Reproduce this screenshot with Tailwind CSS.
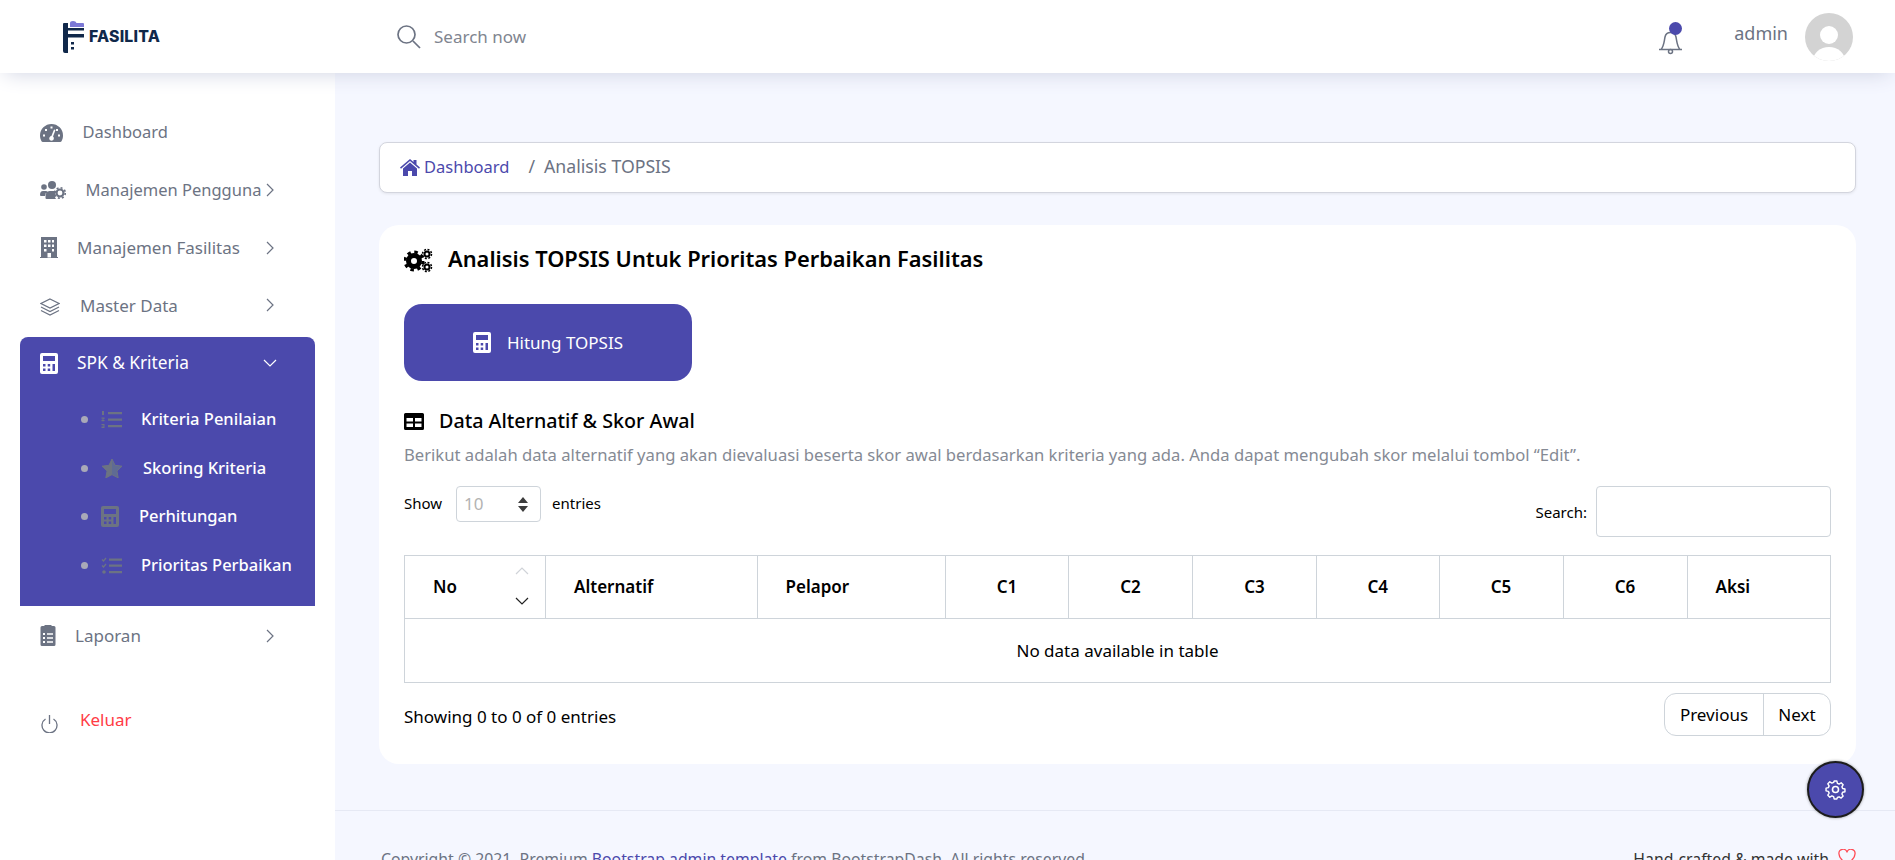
<!DOCTYPE html>
<html lang="id">
<head>
    <meta charset="UTF-8">
    <meta name="viewport" content="width=device-width, initial-scale=1.0">
    <title>Analisis TOPSIS</title>
    <script src="https://cdn.jsdelivr.net/npm/@tailwindcss/browser@4"></script>
</head>
<body class="font-['Noto_Sans',sans-serif] text-black bg-[#f5f7ff]">
    <!-- icon set -->
    <svg class="hidden">
        <symbol id="i-calc" viewBox="0 0 18 21"><path fill="currentColor" fill-rule="evenodd" d="M2 0h14a2 2 0 0 1 2 2v17a2 2 0 0 1-2 2H2a2 2 0 0 1-2-2V2a2 2 0 0 1 2-2zM3 3v5h12V3zM3 11v2.500h2.500V11zM7.700 11v2.500h2.500V11zM12.500 11v7H15v-7zM3 15.500V18h2.500v-2.500zM7.700 15.500V18h2.500v-2.500z"/></symbol>
        <symbol id="i-chev" viewBox="0 0 8 14"><path fill="none" stroke="currentColor" stroke-width="1.200" d="M1 1l6 6-6 6"/></symbol>
    </svg>

    <div class="h-screen overflow-hidden flex flex-col">
        <nav class="relative z-10 h-[73px] shrink-0 bg-white shadow-[0_5px_21px_-5px_#cdd1e1] flex items-center">
            <div class="w-[335px] pl-[63px] flex items-center">
                <svg width="21" height="33" viewBox="0 0 21 33"><path fill="#7b78d6" d="M7 7V3q0-2 3-2t3.500 2H20q1 0 1 1v3z"/><path fill="#10284a" d="M1 3h4v30H2q-2 0-2-2V4q0-1 1-1zM5 8h16v2.500H5zM5 14h16v3.500H5zM8 22h3v2.500H8zM8 27h3v2.500H8z"/></svg>
                <span class="ml-[5px] text-[15.800px] font-['Inter'] font-extrabold text-[#10284a] tracking-[0.2px]">FASILITA</span>
            </div>
            <div class="flex items-center pl-[61px]">
                <svg width="25" height="25" viewBox="0 0 25 25" fill="none" stroke="#6c7383" stroke-width="1.700"><circle cx="10.500" cy="10.500" r="8.500"/><path d="M17 17l7 7"/></svg>
                <input type="text" placeholder="Search now" class="ml-[13px] w-[300px] text-[17px] outline-none placeholder:text-[#7f8590]">
            </div>
            <div class="ml-auto flex items-center">
                <div class="relative w-[25px] h-[25px] mt-[14px]">
                    <svg width="25" height="24" viewBox="0 0 25 24" fill="none" stroke="#6c7383" stroke-width="1.500"><path d="M1 18.500h23M3 18.500C6 15 6 11 7 6c.6-3 3-4.500 5.500-4.500S17.400 3 18 6c1 5 1 9 4 12.500"/><circle cx="12.500" cy="20.500" r="2"/></svg>
                    <span class="absolute -top-[9px] left-[11px] w-[13px] h-[13px] rounded-full bg-[#4b49ac]"></span>
                </div>
                <span class="ml-[51px] -mt-[6px] text-[18px] text-[#6c7383]">admin</span>
                <span class="ml-[17px] mr-[42px] w-[48px] h-[48px] rounded-full bg-[#d3d3d3] overflow-hidden block">
                    <svg width="48" height="48" viewBox="0 0 48 48" fill="#fff"><circle cx="24" cy="22" r="9"/><ellipse cx="24" cy="48" rx="16" ry="14"/></svg>
                </span>
            </div>
        </nav>

        <div class="flex flex-1 min-h-0">
            <aside class="w-[335px] shrink-0 bg-white pt-[31px] text-[17px] text-[#6c7383]">
                <a class="mx-5 pl-5 pr-[41px] h-[57.500px] flex items-center">
                    <span class="w-[42.500px] shrink-0"><svg class="block" width="23" height="18" viewBox="0 0 23 18"><path fill="#6c7383" d="M11.500 0A11.500 11.500 0 0 0 0 11.500c0 2 .5 4 1.500 5.700q.4.800 1.300.8h17.400q.9 0 1.300-.8c1-1.700 1.500-3.700 1.500-5.700A11.500 11.500 0 0 0 11.500 0z"/><path fill="#fff" d="M10.500 2.500h2v2h-2zM5 5h2v2H5zM16 5h2v2h-2zM3 10.500h2v2H3zM18 10.500h2v2h-2zM14 5.500l1.500.6-2.500 6.500a2.300 2.300 0 1 1-1.600-.5z"/></svg></span>
                    <span class="text-[16.500px]">Dashboard</span>
                </a>
                <a class="mx-5 pl-5 pr-[41px] h-[57.500px] flex items-center">
                    <span class="w-[45.500px] shrink-0"><svg class="block" width="26" height="18" viewBox="0 0 26 18" fill="#6c7383"><circle cx="4" cy="6" r="2.800"/><circle cx="12" cy="4" r="4"/><path d="M0 14q0-4 3-4h3q1 0 1.500.5Q5 12 5 15H1q-1 0-1-1zM6.500 18q-1 0-1-1v-1q0-6 4-6h5q1.500 0 2 1-2 1-1 3-1.500 2 .5 4z"/><circle cx="20" cy="12" r="3.500" fill="none" stroke="#6c7383" stroke-width="2.200"/><circle cx="20" cy="12" r="5.300" fill="none" stroke="#6c7383" stroke-width="1.600" stroke-dasharray="2 2.160"/></svg></span>
                    <span class="text-[16.500px]">Manajemen Pengguna</span>
                    <svg class="ml-auto text-[#6c7383]" width="8" height="14"><use href="#i-chev"/></svg>
                </a>
                <a class="mx-5 pl-5 pr-[41px] h-[57.500px] flex items-center">
                    <span class="w-[37px] shrink-0"><svg class="block" width="18" height="21" viewBox="0 0 18 21"><path fill="#6c7383" d="M1 0h16v20h1v1H0v-1h1z"/><path fill="#fff" d="M4 3h2.500v2.500H4zM8 3h2.500v2.500H8zM12 3h2v2.500h-2zM4 7.500h2.500V10H4zM8 7.500h2.500V10H8zM12 7.500h2V10h-2zM4 12h2.500v2.500H4zM12 12h2v2.500h-2zM7.500 16h3.500v4.500H7.500z"/></svg></span>
                    <span>Manajemen Fasilitas</span>
                    <svg class="ml-auto text-[#6c7383]" width="8" height="14"><use href="#i-chev"/></svg>
                </a>
                <a class="mx-5 pl-5 pr-[41px] h-[57.500px] flex items-center">
                    <span class="w-[40px] shrink-0"><svg class="block mt-[4px]" width="20" height="18" viewBox="0 0 20 18" fill="none" stroke="#6c7383" stroke-width="1.200"><path d="M10 1l9 4.500-9 4.500-9-4.500zM1 9l9 4.500L19 9M1 12.500L10 17l9-4.500"/></svg></span>
                    <span>Master Data</span>
                    <svg class="ml-auto text-[#6c7383]" width="8" height="14"><use href="#i-chev"/></svg>
                </a>

                <div class="mx-5 mt-[3px] bg-[#4b49ac] rounded-t-[8px] text-white pb-[16px]">
                    <a class="pl-5 pr-[41px] h-[52px] flex items-center">
                        <span class="w-[37px] shrink-0"><svg class="block" width="18" height="21"><use href="#i-calc"/></svg></span>
                        <span class="text-[17.300px]">SPK &amp; Kriteria</span>
                        <svg class="ml-auto -mr-[3px]" width="14" height="8" viewBox="0 0 14 8" fill="none" stroke="currentColor" stroke-width="1.200"><path d="M1 1l6 6 6-6"/></svg>
                    </a>
                    <ul class="mt-[6px] font-medium text-[16.500px]">
                        <li class="pl-[61px] h-[48.700px] flex items-center">
                            <span class="w-[7px] h-[7px] rounded-full bg-[#a9a9b8] shrink-0"></span>
                            <span class="ml-[13px] w-[40px] shrink-0"><svg class="block" width="21" height="17" viewBox="0 0 21 17" fill="#6c7383"><path d="M7 1h14v2.200H7zM7 7.500h14v2.200H7zM7 14h14v2.200H7zM1 0h2v4H1zM.5 6.500H3.500V8l-2 1h2v1.200H.5V9l2-1.200h-2zM.5 13h3v4h-3v-1h2v-.5h-2v-.8h2v-.7h-2z"/></svg></span>
                            <span>Kriteria Penilaian</span>
                        </li>
                        <li class="pl-[61px] h-[48.700px] flex items-center">
                            <span class="w-[7px] h-[7px] rounded-full bg-[#a9a9b8] shrink-0"></span>
                            <span class="ml-[13px] w-[42px] shrink-0"><svg class="block" width="22" height="20" viewBox="0 0 22 20"><path fill="#5f6b94" stroke="#6c7383" stroke-linejoin="round" d="M11 1l3 6.300 7 .9-5.100 4.800 1.300 6.900L11 16.600 4.800 19.900 6.100 13 1 8.200l7-.9z"/><path fill="#6c7383" d="M11 1v15.600L4.800 19.900 6.100 13 1 8.200l7-.9z"/></svg></span>
                            <span>Skoring Kriteria</span>
                        </li>
                        <li class="pl-[61px] h-[48.700px] flex items-center">
                            <span class="w-[7px] h-[7px] rounded-full bg-[#a9a9b8] shrink-0"></span>
                            <span class="ml-[13px] w-[38px] shrink-0 text-[#6c7383]"><svg class="block" width="18" height="21"><use href="#i-calc"/></svg></span>
                            <span>Perhitungan</span>
                        </li>
                        <li class="pl-[61px] h-[48.700px] flex items-center">
                            <span class="w-[7px] h-[7px] rounded-full bg-[#a9a9b8] shrink-0"></span>
                            <span class="ml-[13px] w-[40px] shrink-0"><svg class="block" width="21" height="17" viewBox="0 0 21 17"><path fill="#6c7383" d="M8 1.500h13v2.200H8zM8 7.500h13v2.200H8zM8 14h13v2.200H8z"/><path fill="none" stroke="#6c7383" stroke-width="1.300" d="M1 2.500l1.500 1.500L5 1M1 8.500L2.500 10 5 7"/><circle cx="3" cy="15" r="1.800" fill="#6c7383"/></svg></span>
                            <span>Prioritas Perbaikan</span>
                        </li>
                    </ul>
                </div>

                <a class="mx-5 pl-5 pr-[41px] mt-px h-[58px] flex items-center">
                    <span class="w-[35px] shrink-0"><svg class="block" width="16" height="21" viewBox="0 0 16 21"><path fill="#6c7383" fill-rule="evenodd" d="M4.500 0h7v1H14q1.500 0 1.500 1.500v17Q15.500 21 14 21H2q-1.500 0-1.500-1.500v-17Q.5 1 2 1h2.500zM3 8h2v2H3zM7 8.300h6v1.400H7zM3 12h2v2H3zM7 12.300h6v1.400H7zM3 16h2v2H3zM7 16.300h6v1.400H7z"/></svg></span>
                    <span>Laporan</span>
                    <svg class="ml-auto text-[#6c7383]" width="8" height="14"><use href="#i-chev"/></svg>
                </a>
                <a class="mx-5 pl-5 mt-[26px] h-[58px] flex items-center">
                    <span class="w-[40px] shrink-0"><svg class="block mt-[8px] ml-[1px]" width="17" height="19" viewBox="0 0 17 19" fill="none" stroke="#6c7383" stroke-width="1.300"><path d="M8.500 1v9M4.500 5a7.500 7.500 0 1 0 8 0"/></svg></span>
                    <span class="text-[#ff3b45]">Keluar</span>
                </a>
            </aside>

            <main class="flex-1 min-w-0 flex flex-col pt-[69px]">
                <div class="ml-[44px] mr-[39px]">
                    <div class="h-[51px] bg-white border border-[#d3d5de] rounded-[8px] shadow-[0_1px_3px_rgba(0,0,0,0.08)] flex items-center pl-[20px] text-[17.700px]">
                        <svg width="20" height="17" viewBox="0 0 20 17" fill="#4b49ac"><path d="M10 0l3.500 3V1h3v4.600L20 8.500l-1 1.200L10 2 1 9.700 0 8.500z"/><path d="M10 3.500l7 6V17h-5v-5H8v5H3V9.500z"/></svg>
                        <a class="ml-[4px] text-[#4b49ac] text-[16.500px]">Dashboard</a>
                        <span class="ml-[19px] -mt-[2px] text-[#6c7383]">/</span>
                        <span class="ml-[9px] -mt-[2px] text-[#6c7383]">Analisis TOPSIS</span>
                    </div>

                    <section class="mt-[32px] h-[539px] bg-white rounded-[20px] px-[25px] pt-[18px]">
                        <h1 class="flex items-center h-[32px] text-[21.850px] font-semibold">
                            <svg class="mt-[2px]" width="29" height="25" viewBox="0 0 29 25" fill="none" stroke="#000"><circle cx="10" cy="13" r="5.500" stroke-width="5"/><circle cx="10" cy="13" r="9" stroke-width="3" stroke-dasharray="3.500 3.570"/><circle cx="23" cy="6" r="2.500" stroke-width="2"/><circle cx="23" cy="6" r="4.500" stroke-width="1.500" stroke-dasharray="2 1.530"/><circle cx="23" cy="19" r="2.500" stroke-width="2"/><circle cx="23" cy="19" r="4.500" stroke-width="1.500" stroke-dasharray="2 1.530"/></svg>
                            <span class="ml-[15px]">Analisis TOPSIS Untuk Prioritas Perbaikan Fasilitas</span>
                        </h1>
                        <button class="mt-[29px] w-[288px] h-[77px] rounded-[18px] bg-[#4b49ac] text-white text-[17px] flex items-center justify-center">
                            <svg class="text-white" width="18" height="21"><use href="#i-calc"/></svg>
                            <span class="ml-[16px]">Hitung TOPSIS</span>
                        </button>
                        <h2 class="mt-[27px] flex items-center h-[26px] text-[19.700px] font-medium">
                            <svg width="20" height="17" viewBox="0 0 20 17"><path fill="#000" fill-rule="evenodd" d="M1.500 0h17Q20 0 20 1.500v14q0 1.500-1.500 1.500h-17Q0 17 0 15.500v-14Q0 0 1.500 0zM2.500 5v3.500h6.500V5zM11 5v3.500h6.500V5zM2.500 10.500V14h6.500v-3.500zM11 10.500V14h6.500v-3.500z"/></svg>
                            <span class="ml-[15px]">Data Alternatif &amp; Skor Awal</span>
                        </h2>
                        <p class="mt-[9px] h-[24px] leading-[24px] text-[16.650px] text-[#858a94] whitespace-nowrap">Berikut adalah data alternatif yang akan dievaluasi beserta skor awal berdasarkan kriteria yang ada. Anda dapat mengubah skor melalui tombol “Edit”.</p>

                        <div class="mt-[19px] h-[51px] flex justify-between text-[15px]">
                            <div class="flex items-center h-[36px]">
                                <span class="-mt-[2px]">Show</span>
                                <div class="relative ml-[14px]">
                                    <select class="appearance-none w-[85px] h-[36px] pl-[7px] border border-[#ced4da] rounded-[4px] text-[17px] text-[#b3b3b3] bg-white outline-none"><option>10</option></select>
                                    <svg class="absolute right-[13px] top-[11px]" width="10" height="15" viewBox="0 0 10 15" fill="#3d3d3d"><path d="M5 0l5 6H0zM0 9h10l-5 6z"/></svg>
                                </div>
                                <span class="ml-[11px] -mt-[2px]">entries</span>
                            </div>
                            <div class="flex items-center">
                                <span class="mt-[2px]">Search:</span>
                                <input type="search" class="ml-[9px] w-[235px] h-[51px] border border-[#ced4da] rounded-[4px] outline-none">
                            </div>
                        </div>

                        <table class="mt-[18px] w-[1426px] table-fixed border-collapse text-[17px]">
                            <thead>
                                <tr class="h-[63px]">
                                    <th class="relative w-[141px] border border-[#ced4da] pl-[28px] text-left font-semibold">No
                                        <svg class="absolute right-[16px] top-[11px] text-[#d0d3d8]" width="14" height="8" viewBox="0 0 14 8" fill="none" stroke="currentColor" stroke-width="1.200"><path d="M1 7l6-6 6 6"/></svg>
                                        <svg class="absolute right-[16px] top-[41px] text-[#222]" width="14" height="8" viewBox="0 0 14 8" fill="none" stroke="currentColor" stroke-width="1.200"><path d="M1 1l6 6 6-6"/></svg>
                                    </th>
                                    <th class="w-[211.500px] border border-[#ced4da] pl-[28px] text-left font-semibold">Alternatif</th>
                                    <th class="w-[188.500px] border border-[#ced4da] pl-[28px] text-left font-semibold">Pelapor</th>
                                    <th class="w-[123px] border border-[#ced4da] font-semibold">C1</th>
                                    <th class="w-[124px] border border-[#ced4da] font-semibold">C2</th>
                                    <th class="w-[124px] border border-[#ced4da] font-semibold">C3</th>
                                    <th class="w-[122.500px] border border-[#ced4da] font-semibold">C4</th>
                                    <th class="w-[124px] border border-[#ced4da] font-semibold">C5</th>
                                    <th class="w-[124px] border border-[#ced4da] font-semibold">C6</th>
                                    <th class="w-[143.500px] border border-[#ced4da] pl-[28px] text-left font-semibold">Aksi</th>
                                </tr>
                            </thead>
                            <tbody>
                                <tr class="h-[64px]">
                                    <td colspan="10" class="border border-[#ced4da] text-center">No data available in table</td>
                                </tr>
                            </tbody>
                        </table>

                        <div class="mt-[10px] flex justify-between items-center text-[17px]">
                            <span class="mt-[4px]">Showing 0 to 0 of 0 entries</span>
                            <div class="flex h-[43px] border border-[#ced4da] rounded-[12px]">
                                <a class="w-[99px] flex items-center justify-center border-r border-[#ced4da]">Previous</a>
                                <a class="w-[66px] flex items-center justify-center">Next</a>
                            </div>
                        </div>
                    </section>
                </div>

                <footer class="mt-[46px] border-t border-[#e6e9f4] pl-[46px] pr-[39px] pt-[37px] flex justify-between text-[15.800px] text-[#6c7383]">
                    <span>Copyright © 2021. Premium <a class="text-[#4b49ac]">Bootstrap admin template</a> from BootstrapDash. All rights reserved.</span>
                    <span class="flex items-start text-[#333]">Hand-crafted &amp; made with
                        <svg class="ml-[9px] mt-[1px]" width="18" height="16" viewBox="0 0 18 16" fill="none" stroke="#ff4d57" stroke-width="1.300"><path d="M9 15C3 11 1 8 1 5a4 4 0 0 1 8-1.500A4 4 0 0 1 17 5c0 3-2 6-8 10z"/></svg>
                    </span>
                </footer>
            </main>
        </div>
    </div>

    <button class="fixed left-[1807px] top-[761px] w-[57px] h-[57px] rounded-full bg-[#4b49ac] border-2 border-[#1c1c1c] flex items-center justify-center shadow-[0_0_3px_rgba(0,0,0,0.4)]">
        <svg width="21" height="21" viewBox="0 0 21 21" fill="none" stroke="#fff" stroke-width="1.600" stroke-linejoin="round"><path d="M9 1h3l.6 2.600 1.900.8L16.800 3 19 5.200l-1.400 2.300.8 1.900 2.600.6v3l-2.600.6-.8 1.900 1.400 2.300-2.200 2.200-2.300-1.400-1.900.8L12 21H9l-.6-2.600-1.900-.8L4.200 19 2 16.800l1.400-2.300-.8-1.900L0 12V9l2.600-.6.8-1.900L2 4.200 4.200 2l2.300 1.400 1.900-.8z" transform="translate(1.050 1.050) scale(.9)"/><circle cx="10.500" cy="10.500" r="3"/></svg>
    </button>
</body>
</html>
